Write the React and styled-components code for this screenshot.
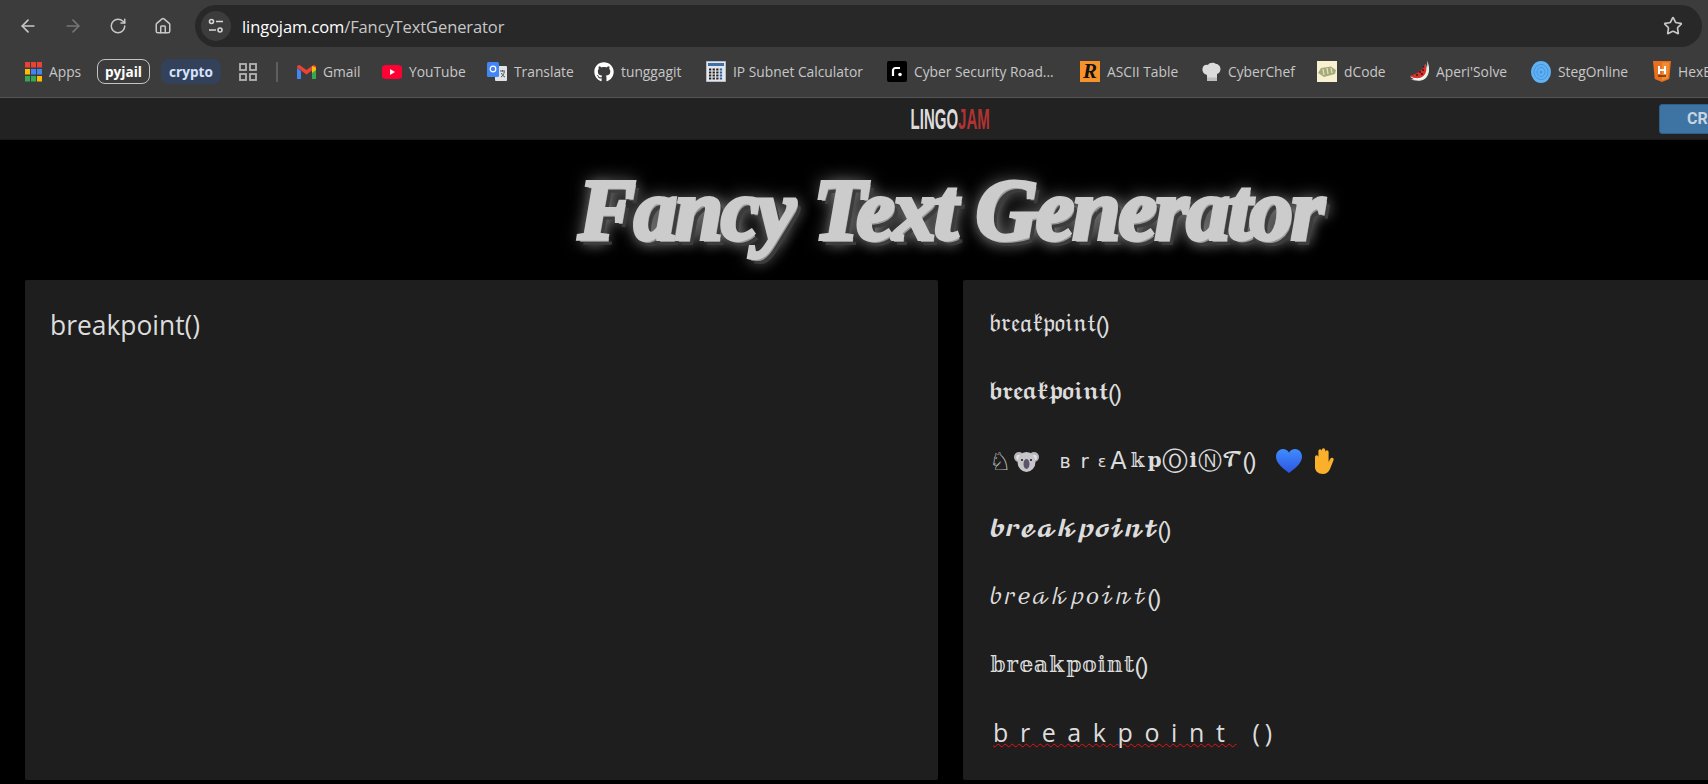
import React from 'react';
import styled, { createGlobalStyle } from 'styled-components';
import { ArrowLeft, ArrowRight, RotateCw, House, Star } from 'lucide-react';
import { FaGithub } from 'react-icons/fa';

const GlobalStyle = createGlobalStyle`
  html, body { margin: 0; padding: 0; background: #000; overflow: hidden; }
  body { font-family: "Open Sans", "Noto Sans", sans-serif; }
`;

const Window = styled.div`
  width: 1708px;
  height: 784px;
  overflow: hidden;
  background: #000;
`;

const Toolbar = styled.div`
  height: 52px;
  box-sizing: border-box;
  padding: 5px 6px 0 5px;
  background: #3c3c3c;
  display: flex;
  align-items: flex-start;
`;

const NavGroup = styled.div`
  display: flex;
  width: 190px;
  flex: none;
`;

const NavButton = styled.div`
  width: 45px;
  height: 42px;
  display: flex;
  align-items: center;
  justify-content: center;
  color: ${props => (props.disabled ? '#757575' : '#c7c7c7')};
`;

const Omnibox = styled.div`
  flex: 1;
  height: 42px;
  border-radius: 21px;
  background: #282828;
  display: flex;
  align-items: center;
  padding: 0 19px 0 6px;
`;

const TuneBadge = styled.div`
  width: 30px;
  height: 30px;
  border-radius: 50%;
  background: #3c3c3c;
  display: flex;
  align-items: center;
  justify-content: center;
  margin-right: 11px;
`;

const Url = styled.div`
  flex: 1;
  font-size: 16.5px;
  letter-spacing: -0.1px;
  color: #c7c7c7;
  span { color: #fff; }
`;

const BookmarkBar = styled.div`
  height: 46px;
  box-sizing: border-box;
  background: #3c3c3c;
  border-bottom: 1px solid #545454;
  padding: 0 0 6px 25px;
  display: flex;
  align-items: center;
  white-space: nowrap;
  overflow: hidden;
  svg { flex: none; }
`;

const Bookmark = styled.div`
  display: flex;
  flex: none;
  align-items: center;
  gap: 7px;
  width: ${props => props.$w}px;
  font-size: 13.8px;
  color: #c7c7c7;
`;

const Chip = styled.div`
  flex: none;
  height: 25px;
  box-sizing: border-box;
  width: ${props => props.$w}px;
  margin-right: ${props => props.$gap}px;
  border-radius: 8px;
  display: flex;
  align-items: center;
  justify-content: center;
  font-size: 13.6px;
  font-weight: 700;
  color: ${props => (props.$outlined ? '#fff' : '#d3e3fd')};
  background: ${props => (props.$outlined ? 'transparent' : '#33415a')};
  border: ${props => (props.$outlined ? '1.5px solid #c4c4c4' : 'none')};
`;

const Divider = styled.div`
  flex: none;
  width: 2px;
  height: 20px;
  background: #5e5e5e;
  margin: 0 19px 0 19px;
`;

const Page = styled.div`
  width: 1901px;
`;

const NavBar = styled.div`
  height: 42px;
  box-sizing: border-box;
  background: #222;
  border-bottom: 1px solid #1a1a1a;
  display: grid;
  grid-template-columns: 1fr auto 1fr;
  align-items: center;
`;

const Logo = styled.div`
  grid-column: 2;
  font-family: "Liberation Sans", sans-serif;
  font-weight: 700;
  font-size: 30px;
  line-height: 30px;
  transform: scaleX(0.5);
  color: #dcdcdc;
  span { color: #b03333; }
`;

const CreateButton = styled.div`
  grid-column: 3;
  justify-self: end;
  width: 218px;
  height: 30px;
  margin-right: 24px;
  box-sizing: border-box;
  padding-left: 27px;
  display: flex;
  align-items: center;
  background: #3e74a3;
  border: 1px solid #2f5d86;
  border-radius: 3px;
  font-family: Roboto, sans-serif;
  font-weight: 700;
  font-size: 16px;
  color: #c8d5e1;
`;

const TitleBlock = styled.div`
  height: 140px;
  display: flex;
  align-items: center;
  justify-content: center;
`;

const Title = styled.h1`
  margin: 0;
  font-family: "Liberation Serif", serif;
  font-style: italic;
  font-weight: 700;
  font-size: 86px;
  line-height: 100px;
  letter-spacing: -1.8px;
  color: #ccc;
  -webkit-text-stroke: 4px #ccc;
  stroke-linejoin: round;
  text-shadow: 2px 3px 0 #999, 5px 6px 0 #3c3c3c, 0 0 18px rgba(255, 255, 255, 0.6), 4px 5px 14px rgba(255, 255, 255, 0.35);
`;

const Panels = styled.div`
  display: grid;
  grid-template-columns: 1fr 1fr;
  gap: 25px;
  padding: 0 25px;
`;

const Panel = styled.div`
  height: 500px;
  box-sizing: border-box;
  background: #1e1e1e;
  border-radius: 2px;
  color: #dcdcdc;
`;

const InputPanel = styled(Panel)`
  padding: 25px;
  font-size: 26.4px;
  line-height: 40px;
`;

const OutputPanel = styled(Panel)`
  padding: 8px 26px;
`;

const Row = styled.div`
  height: 68.3px;
  box-sizing: border-box;
  padding-top: 5px;
  display: flex;
  align-items: center;
  white-space: pre;
  font-family: "DejaVu Math TeX Gyre", "DejaVu Serif", "DejaVu Sans", "Liberation Serif", serif;
  font-size: 22px;
  letter-spacing: ${props => props.$track || 0}px;
`;

const Parens = styled.span`
  font-family: "Liberation Sans", sans-serif;
  font-size: 24px;
  font-weight: 400;
  letter-spacing: -2px;
  margin-left: ${props => props.$ml || 0}px;
`;

const Wavy = styled.span`
  text-decoration: underline wavy #f01010 1.2px;
  text-underline-offset: 1px;
`;

const Spaced = styled.div`
  height: 68.3px;
  display: flex;
  align-items: center;
  white-space: pre;
  padding-left: 4px;
  font-family: "Open Sans", sans-serif;
  font-size: 25px;
  letter-spacing: 11.6px;
`;

const SpacedParens = styled.span`
  letter-spacing: 5px;
  margin-left: 16px;
`;

const Glyph = styled.span`
  font-family: ${props => (props.$sans ? '"DejaVu Sans", "Liberation Sans", sans-serif' : 'inherit')};
  font-size: ${props => props.$size || 22}px;
  margin-left: ${props => props.$ml || 0}px;
`;

const EmojiSlot = styled.span`
  display: inline-flex;
  margin-left: ${props => props.$ml || 0}px;
`;

const AsciiBadge = styled.span`
  flex: none;
  width: 20px;
  height: 21px;
  background: #f7922b;
  color: #111;
  font-family: "Liberation Serif", serif;
  font-weight: 700;
  font-style: italic;
  font-size: 21px;
  line-height: 21px;
  text-align: center;
`;

const Apps = () => {
  const c = ['#ea4335', '#ea4335', '#ea4335', '#fbbc04', '#4285f4', '#4285f4', '#34a853', '#34a853', '#fbbc04'];
  return (
    <svg width="17" height="20" viewBox="0 0 17 20">
      {c.map((f, i) => <rect key={i} x={(i % 3) * 6} y={Math.floor(i / 3) * 7} width="5" height="5.5" fill={f} />)}
    </svg>
  );
};

const Tabs = () => (
  <svg width="18" height="20" viewBox="0 0 18 20" fill="none" stroke="#b4b4b4" strokeWidth="1.8">
    <rect x="1" y="2" width="6" height="6" />
    <rect x="11" y="2" width="6" height="6" />
    <rect x="1" y="12" width="6" height="6" />
    <rect x="11" y="12" width="6" height="6" />
  </svg>
);

const Gmail = () => (
  <svg width="19" height="14" viewBox="0 0 19 14">
    <path d="M0 3v11h4V6z" fill="#4285f4" />
    <path d="M15 6v8h4V3z" fill="#34a853" />
    <path d="M0 2.5 9.5 9.5 19 2.5V2a2 2 0 0 0-3.2-1.6L9.5 5 3.2.4A2 2 0 0 0 0 2z" fill="#ea4335" />
    <path d="M15 .9 19 2.5V5l-4 3z" fill="#fbbc04" />
  </svg>
);

const YouTube = () => (
  <svg width="20" height="14" viewBox="0 0 20 14">
    <rect width="20" height="14" rx="3.5" fill="#ff0033" />
    <path d="M8 4v6l5-3z" fill="#fff" />
  </svg>
);

const Translate = () => (
  <svg width="20" height="20" viewBox="0 0 20 20">
    <rect x="8" y="4" width="12" height="15" rx="1" fill="#dfe3e8" />
    <rect x="0" y="0" width="12" height="15" rx="1.5" fill="#4285f4" />
    <circle cx="6" cy="7" r="2.8" fill="none" stroke="#fff" strokeWidth="1.2" />
    <path d="M13 9h5M15.5 8v1.5M14 15c2-1 3-3 3.3-5.5M14.5 11c.5 2 2 3.5 3.5 4" fill="none" stroke="#555" strokeWidth="1" />
  </svg>
);

const Calculator = () => (
  <svg width="20" height="21" viewBox="0 0 20 21">
    <rect width="20" height="21" fill="#e3e7ec" stroke="#8a9099" />
    <rect x="2" y="2" width="16" height="3" fill="#3f6fa8" />
    {[0, 1, 2, 3].map(r => [0, 1, 2, 3].map(k => (
      <rect key={`${r}-${k}`} x={3 + k * 3.6} y={7.5 + r * 3} width="2.3" height="2" fill={k === 3 ? '#2c5d95' : '#222'} />
    )))}
  </svg>
);

const Roadmap = () => (
  <svg width="20" height="21" viewBox="0 0 20 21">
    <rect width="20" height="21" rx="2" fill="#000" />
    <path d="M6 15V9.5A2.5 2.5 0 0 1 8.5 7H13" fill="none" stroke="#fff" strokeWidth="2.2" />
    <circle cx="13" cy="13.5" r="1.8" fill="#fff" />
  </svg>
);

const Chef = () => (
  <svg width="19" height="20" viewBox="0 0 19 20">
    <path d="M5 19V13C2 12 0 10 .5 6.5 1 3 4 2.5 6 3c1-2.5 6-3 8-1 2 0 4.500 2 4.500 5 0 3-2 4.500-3.500 5v7z" fill="#dcdcdc" />
    <path d="M5 15.500h10V19H5z" fill="#bdbdbd" />
  </svg>
);

const DCode = () => (
  <svg width="20" height="21" viewBox="0 0 20 21">
    <rect width="20" height="21" fill="#f7f1d2" />
    <path d="M1 12l3-5 10-1.500 5 3.500-1 4-11 3z" fill="#a7ab7b" />
    <path d="M6 8l1 6M10 7l1 6M14 7l1 5" stroke="#e2e4c5" strokeWidth="1.2" />
  </svg>
);

const Melon = () => (
  <svg width="20" height="21" viewBox="0 0 20 21">
    <path d="M18 0C20 10 13 20 1 18c5 2 17 5 19-8 .4-4-.6-8-2-10z" fill="#e8f0e4" />
    <path d="M16.500 3C17 10 11 16 1 15.500 4 19 11 20 15 16 18.500 12.500 18.500 7 16.500 3z" fill="#fff" />
    <path d="M16 3C15 8 8 13 1 15c4 3 10 3 13.500 0C18 11.500 18 7 16 3z" fill="#d8322e" />
    <g fill="#311">
      <circle cx="11" cy="11" r=".9" /><circle cx="14" cy="9" r=".9" /><circle cx="8" cy="14" r=".9" />
      <circle cx="13" cy="13" r=".9" /><circle cx="14.500" cy="6" r=".8" />
    </g>
  </svg>
);

const Steg = () => (
  <svg width="20" height="22" viewBox="0 0 20 22">
    <ellipse cx="10" cy="11" rx="10" ry="11" fill="#5fb3f5" />
    <ellipse cx="10" cy="11" rx="7" ry="7.500" fill="none" stroke="#4a93e0" />
    <ellipse cx="10" cy="11" rx="4" ry="4.500" fill="none" stroke="#4a93e0" />
    <circle cx="10" cy="11" r="1.500" fill="#4a93e0" />
  </svg>
);

const HexShield = () => (
  <svg width="18" height="21" viewBox="0 0 18 21">
    <path d="M0 0h18l-1.700 18L9 21l-7.300-3z" fill="#e8701f" />
    <path d="M9 1.500h7.300l-1.400 15.500L9 19.500z" fill="#f48a2e" />
    <path d="M6 5v8M12 5v8M6 9h6" stroke="#fff" strokeWidth="2" fill="none" />
    <path d="M5 15h8" stroke="#5a3510" strokeWidth="1.500" />
  </svg>
);

const TuneIcon = () => (
  <svg width="16" height="16" viewBox="0 0 16 16" fill="none" stroke="#d6d6d6" strokeWidth="1.600">
    <circle cx="3.500" cy="3.500" r="2" />
    <path d="M8 3.500h7M1 12h7" />
    <circle cx="12" cy="12" r="2" />
  </svg>
);

const Koala = () => (
  <svg width="25" height="23" viewBox="0 0 25 23">
    <circle cx="5" cy="7" r="5" fill="#b8b6bb" />
    <circle cx="20" cy="7" r="5" fill="#b8b6bb" />
    <circle cx="5" cy="7.500" r="2.800" fill="#e9dfe3" />
    <circle cx="20" cy="7.500" r="2.800" fill="#e9dfe3" />
    <ellipse cx="12.500" cy="12" rx="9" ry="10" fill="#c7c5ca" />
    <circle cx="8" cy="10" r="1.100" fill="#222" />
    <circle cx="17" cy="10" r="1.100" fill="#222" />
    <ellipse cx="12.500" cy="14" rx="3" ry="5" fill="#5c5468" />
  </svg>
);

const Heart = () => (
  <svg width="26" height="24" viewBox="0 0 26 24">
    <defs>
      <linearGradient id="heartFill" x1="0" y1="0" x2="0" y2="1">
        <stop offset="0" stopColor="#3f8cff" />
        <stop offset="1" stopColor="#2e56e0" />
      </linearGradient>
    </defs>
    <path d="M13 24C5 18 0 13.500 0 7.500 0 3 3.500 0 7 0c2.500 0 4.800 1.300 6 3.500C14.200 1.300 16.500 0 19 0c3.500 0 7 3 7 7.500C26 13.500 21 18 13 24z" fill="url(#heartFill)" />
  </svg>
);

const Hand = () => (
  <svg width="23" height="26" viewBox="0 0 23 26" fill="#fbb02c">
    <path d="M3 9a1.700 1.700 0 0 1 3.400 0V3a1.700 1.700 0 0 1 3.400 0V2a1.700 1.700 0 0 1 3.400 0v2a1.700 1.700 0 0 1 3.400 0v10l1.500-3c1.200-2.200 4.500-1 3.400 1.200L18 21c-1.500 3.500-4 5-7 5-5 0-8-3-8-7z" />
  </svg>
);

const bookmarks = [
  { w: 85, icon: <Gmail />, label: 'Gmail' },
  { w: 105, icon: <YouTube />, label: 'YouTube' },
  { w: 107, icon: <Translate />, label: 'Translate' },
  { w: 112, icon: <FaGithub size={20} color="#fff" />, label: 'tunggagit' },
  { w: 181, icon: <Calculator />, label: 'IP Subnet Calculator' },
  { w: 193, icon: <Roadmap />, label: 'Cyber Security Road...' },
  { w: 122, icon: <AsciiBadge>R</AsciiBadge>, label: 'ASCII Table' },
  { w: 115, icon: <Chef />, label: 'CyberChef' },
  { w: 92, icon: <DCode />, label: 'dCode' },
  { w: 122, icon: <Melon />, label: "Aperi'Solve" },
  { w: 122, icon: <Steg />, label: 'StegOnline' },
  { w: 90, icon: <HexShield />, label: 'HexEd.it' },
];

const App = () => (
  <Window>
    <GlobalStyle />
    <Toolbar>
      <NavGroup>
        <NavButton><ArrowLeft size={20} /></NavButton>
        <NavButton disabled><ArrowRight size={20} /></NavButton>
        <NavButton><RotateCw size={18} /></NavButton>
        <NavButton><House size={18} /></NavButton>
      </NavGroup>
      <Omnibox>
        <TuneBadge><TuneIcon /></TuneBadge>
        <Url><span>lingojam.com</span>/FancyTextGenerator</Url>
        <Star size={20} color="#c7c7c7" />
      </Omnibox>
    </Toolbar>
    <BookmarkBar>
      <Bookmark $w={72}><Apps />Apps</Bookmark>
      <Chip $outlined $w={53} $gap={11}>pyjail</Chip>
      <Chip $w={60} $gap={18}>crypto</Chip>
      <Tabs />
      <Divider />
      {bookmarks.map(b => <Bookmark key={b.label} $w={b.w}>{b.icon}{b.label}</Bookmark>)}
    </BookmarkBar>
    <Page>
      <NavBar>
        <Logo>LINGO<span>JAM</span></Logo>
        <CreateButton>CR</CreateButton>
      </NavBar>
      <TitleBlock>
        <Title>Fancy Text Generator</Title>
      </TitleBlock>
      <Panels>
        <InputPanel>breakpoint()</InputPanel>
        <OutputPanel>
          <Row $track={-2}>𝔟𝔯𝔢𝔞𝔨𝔭𝔬𝔦𝔫𝔱<Parens>()</Parens></Row>
          <Row $track={-2.4}>𝖇𝖗𝖊𝖆𝖐𝖕𝖔𝖎𝖓𝖙<Parens>()</Parens></Row>
          <Row>
            <Glyph $sans $size={25}>♘</Glyph>
            <EmojiSlot $ml={3}><Koala /></EmojiSlot>
            <Glyph $sans $ml={20} $size={19}>ʙ</Glyph>
            <Glyph $sans $ml={10} $size={20}>r</Glyph>
            <Glyph $sans $ml={9} $size={16}>ε</Glyph>
            <Glyph $sans $ml={4} $size={24}>A</Glyph>
            <Glyph $ml={3} $size={20}>𝕜𝐩</Glyph>
            <Glyph $sans $size={26}>Ⓞ</Glyph>
            <Glyph $size={20}>𝐢</Glyph>
            <Glyph $sans $size={24}>Ⓝ</Glyph>
            <Glyph $size={18}>𝓣</Glyph>
            <Parens>()</Parens>
            <EmojiSlot $ml={21}><Heart /></EmojiSlot>
            <EmojiSlot $ml={10}><Hand /></EmojiSlot>
          </Row>
          <Row $track={-1.6}>𝓫𝓻𝓮𝓪𝓴𝓹𝓸𝓲𝓷𝓽<Parens>()</Parens></Row>
          <Row>𝒷𝓇𝑒𝒶𝓀𝓅𝑜𝒾𝓃𝓉<Parens>()</Parens></Row>
          <Row $track={-1.3}>𝕓𝕣𝕖𝕒𝕜𝕡𝕠𝕚𝕟𝕥<Parens>()</Parens></Row>
          <Spaced><Wavy>breakpoint</Wavy><SpacedParens>()</SpacedParens></Spaced>
        </OutputPanel>
      </Panels>
    </Page>
  </Window>
);

export default App;
